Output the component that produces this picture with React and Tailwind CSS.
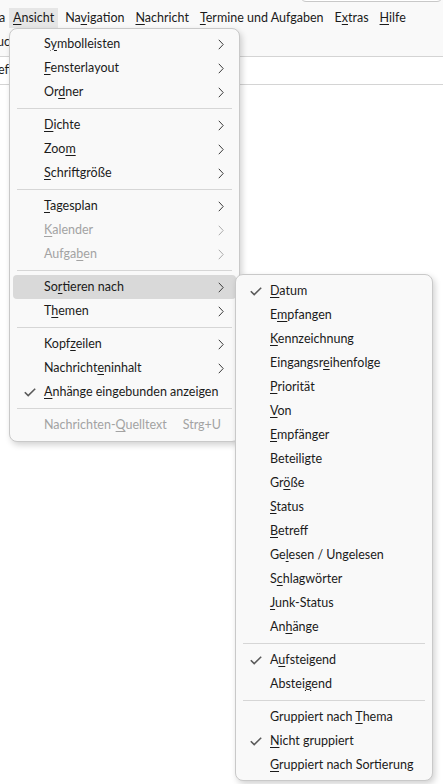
import React from 'react';

const FONT = { fontFamily: 'Lato, "Noto Sans", sans-serif' };

function Label({ text, u }) {
  if (u == null) return <span>{text}</span>;
  return (
    <span>
      {text.slice(0, u)}
      <span className="underline underline-offset-2 decoration-1">{text[u]}</span>
      {text.slice(u + 1)}
    </span>
  );
}

function Chevron() {
  return (
    <svg width="6" height="11" viewBox="0 0 6 11" className="text-[#3b3b3b]">
      <path d="M0.8 0.8 L5.2 5.5 L0.8 10.2" fill="none" stroke="currentColor" strokeWidth="1" />
    </svg>
  );
}

function Check() {
  return (
    <svg width="12" height="9" viewBox="0 0 12 9" className="text-[#5a5a5a]">
      <path d="M0.8 4.2 L4.2 7.6 L11.2 0.8" fill="none" stroke="currentColor" strokeWidth="1.6" />
    </svg>
  );
}

function Item({ text, u, sub, checked, disabled, active, accel }) {
  return (
    <div
      className={`relative flex items-center h-[24px] rounded-[4px] pl-[31px] pr-[12px] ${
        active ? 'bg-[#d9d9d9]' : ''
      } ${disabled ? 'text-[#a3a3a3]' : 'text-[#1b1b1b]'}`}
    >
      {checked && (
        <span className="absolute left-[11px] top-[8px] leading-none">
          <Check />
        </span>
      )}
      <span className="flex-1 whitespace-nowrap">
        <Label text={text} u={u} />
      </span>
      {accel && <span className="ml-4 mr-[10px] whitespace-nowrap">{accel}</span>}
      {sub && (
        <span className={`leading-none ${disabled ? 'opacity-40' : ''}`}>
          <Chevron />
        </span>
      )}
    </div>
  );
}

function Sep() {
  return <div className="h-px bg-[#d6d6d6] mx-[4px] my-[4px]" />;
}

const topItems = [
  ['Ansicht', 0],
  ['Navigation', 2],
  ['Nachricht', 0],
  ['Termine und Aufgaben', 0],
  ['Extras', 1],
  ['Hilfe', 0],
];

export default function App() {
  return (
    <div className="relative w-[443px] h-[784px] overflow-hidden bg-white text-[12.5px]" style={FONT}>
      {/* background window */}
      <div className="bg-[#f9f9f9]">
        <div className="h-[8px] overflow-hidden flex justify-end">
          <div className="w-[143px] h-[20px] -mt-[18px] shrink-0 rounded-md border border-[#c8c8c8] bg-white" />
        </div>
        <div className="flex items-center h-[20px] text-[#1b1b1b]">
          <span className="w-[10px] -ml-[1px] overflow-hidden whitespace-nowrap">a</span>
          {topItems.map(([t, u], i) => (
            <span
              key={t}
              className={`h-full flex items-center px-[4px] mr-[3px] ${i === 0 ? 'bg-[#e6e6e6]' : ''}`}
            >
              <Label text={t} u={u} />
            </span>
          ))}
        </div>
        <div className="h-[29px] flex items-center border-b border-[#d4d4d4] text-[#1b1b1b]">
          <span className="-ml-[3px]">uc</span>
        </div>
      </div>
      <div className="h-[28px] flex items-center border-b border-[#d4d4d4] text-[#1b1b1b]">
        <span className="-ml-[2px]">eff</span>
      </div>

      {/* Ansicht menu */}
      <div className="absolute left-[9px] top-[28px] w-[231px] rounded-[8px] border border-[#c9c9c9] bg-[#f9f9f9] px-[3px] pt-[3px] pb-[4px] shadow-[2px_3px_6px_rgba(0,0,0,0.18)]">
        <Item text="Symbolleisten" u={1} sub />
        <Item text="Fensterlayout" u={0} sub />
        <Item text="Ordner" u={2} sub />
        <Sep />
        <Item text="Dichte" u={0} sub />
        <Item text="Zoom" u={3} sub />
        <Item text="Schriftgröße" u={0} sub />
        <Sep />
        <Item text="Tagesplan" u={0} sub />
        <Item text="Kalender" u={0} sub disabled />
        <Item text="Aufgaben" u={5} sub disabled />
        <Sep />
        <Item text="Sortieren nach" u={2} sub active />
        <Item text="Themen" u={1} sub />
        <Sep />
        <Item text="Kopfzeilen" u={4} sub />
        <Item text="Nachrichteninhalt" u={9} sub />
        <Item text="Anhänge eingebunden anzeigen" u={0} checked />
        <Sep />
        <Item text="Nachrichten-Quelltext" u={12} disabled accel="Strg+U" />
      </div>

      {/* Sortieren nach submenu */}
      <div className="absolute left-[235px] top-[274px] w-[198px] rounded-[8px] border border-[#c9c9c9] bg-[#f9f9f9] px-[3px] pt-[4px] pb-[3px] shadow-[2px_3px_6px_rgba(0,0,0,0.18)]">
        <Item text="Datum" u={0} checked />
        <Item text="Empfangen" u={1} />
        <Item text="Kennzeichnung" u={0} />
        <Item text="Eingangsreihenfolge" u={9} />
        <Item text="Priorität" u={0} />
        <Item text="Von" u={0} />
        <Item text="Empfänger" u={0} />
        <Item text="Beteiligte" />
        <Item text="Größe" u={2} />
        <Item text="Status" u={0} />
        <Item text="Betreff" u={0} />
        <Item text="Gelesen / Ungelesen" u={2} />
        <Item text="Schlagwörter" u={1} />
        <Item text="Junk-Status" u={0} />
        <Item text="Anhänge" u={2} />
        <Sep />
        <Item text="Aufsteigend" u={1} checked />
        <Item text="Absteigend" u={6} />
        <Sep />
        <Item text="Gruppiert nach Thema" u={15} />
        <Item text="Nicht gruppiert" u={0} checked />
        <Item text="Gruppiert nach Sortierung" u={0} />
      </div>
    </div>
  );
}
